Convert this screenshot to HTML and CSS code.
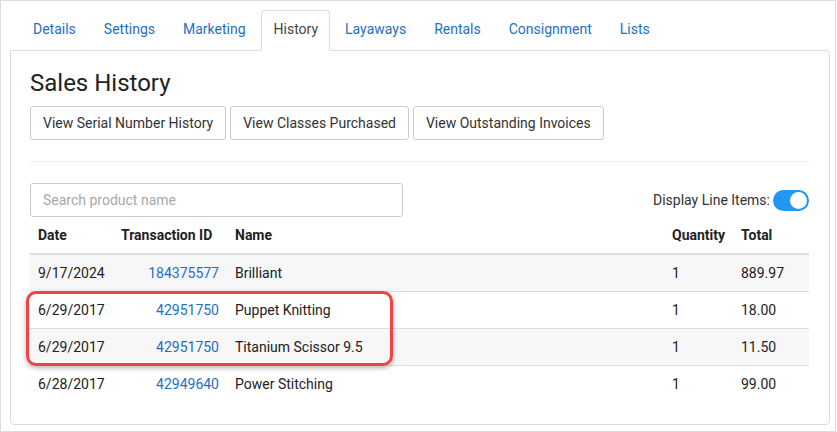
FILE: index.html
```html
<!DOCTYPE html>
<html>
<head>
<meta charset="utf-8">
<link rel="stylesheet" href="styles.css">
</head>
<body>
<div class="frame">
  <ul class="tabs">
    <li class="tab">Details</li>
    <li class="tab">Settings</li>
    <li class="tab">Marketing</li>
    <li class="tab active">History</li>
    <li class="tab">Layaways</li>
    <li class="tab">Rentals</li>
    <li class="tab">Consignment</li>
    <li class="tab">Lists</li>
  </ul>
  <div class="card">
    <h3 class="title">Sales History</h3>
    <div class="btns">
      <button class="btn">View Serial Number History</button>
      <button class="btn">View Classes Purchased</button>
      <button class="btn">View Outstanding Invoices</button>
    </div>
    <hr class="sep">
    <div class="filter">
      <input class="search" type="text" placeholder="Search product name">
      <div class="toggle-wrap">
        <span class="toggle-label">Display Line Items:</span>
        <span class="toggle"><span class="knob"></span></span>
      </div>
    </div>
    <div class="table-wrap">
      <table class="tbl">
        <colgroup>
          <col class="c-date"><col class="c-id"><col class="c-name"><col class="c-qty"><col class="c-total">
        </colgroup>
        <thead>
          <tr><th>Date</th><th>Transaction ID</th><th>Name</th><th>Quantity</th><th>Total</th></tr>
        </thead>
        <tbody>
          <tr class="odd"><td>9/17/2024</td><td class="id"><a>184375577</a></td><td>Brilliant</td><td>1</td><td>889.97</td></tr>
          <tr><td>6/29/2017</td><td class="id"><a>42951750</a></td><td>Puppet Knitting</td><td>1</td><td>18.00</td></tr>
          <tr class="odd"><td>6/29/2017</td><td class="id"><a>42951750</a></td><td>Titanium Scissor 9.5</td><td>1</td><td>11.50</td></tr>
          <tr><td>6/28/2017</td><td class="id"><a>42949640</a></td><td>Power Stitching</td><td>1</td><td>99.00</td></tr>
        </tbody>
      </table>
      <div class="highlight"></div>
    </div>
  </div>
</div>
</body>
</html>
```

FILE: styles.css
```css
* { box-sizing: border-box; }
html, body { margin: 0; padding: 0; background: #fff; }
body {
  font-family: Roboto, "Liberation Sans", Arial, sans-serif;
  font-size: 14px;
  color: #222;
}
.frame {
  width: 836px;
  height: 432px;
  border: 1px solid #ddd;
  padding: 9px 5px 6px 9px;
  display: flex;
  flex-direction: column;
}
.tabs {
  list-style: none;
  margin: 0;
  padding: 0 0 0 10px;
  display: flex;
  height: 40px;
}
.tab {
  padding: 8px 12px 10px;
  line-height: 20px;
  border: 1px solid transparent;
  border-radius: 4px 4px 0 0;
  margin-right: 2px;
  color: #1e6fc4;
  position: relative;
}
.tab.active {
  color: #444;
  background: #fff;
  border-color: #ddd #ddd transparent;
  z-index: 1;
  height: 41px;
  padding-right: 11px;
}
.card {
  flex: 1;
  border: 1px solid #ddd;
  border-radius: 0 4px 4px 4px;
  padding: 0 20px 20px 19px;
  background: #fff;
}
.title {
  font-size: 24px;
  font-weight: 400;
  line-height: 1.1;
  margin: 19px 0 10px;
  color: #222;
}
.btns { display: flex; gap: 4px; }
.btn {
  font-family: inherit;
  font-size: 14px;
  line-height: 20px;
  padding: 6px 12px;
  background: #fff;
  border: 1px solid #ccc;
  border-radius: 3px;
  color: #333;
}
.sep {
  border: 0;
  border-top: 1px solid #eee;
  margin: 21px 0 21px;
}
.filter {
  display: flex;
  justify-content: space-between;
  align-items: center;
}
.search {
  width: 373px;
  height: 34px;
  border: 1px solid #ccc;
  border-radius: 3px;
  padding: 6px 12px;
  font-family: inherit;
  font-size: 14px;
  color: #333;
}
.search::placeholder { color: #a8a8a8; }
.toggle-wrap { display: flex; align-items: center; gap: 3px; }
.toggle-label { color: #333; }
.toggle {
  width: 36px;
  height: 21px;
  border-radius: 11px;
  background: #2196f3;
  display: flex;
  align-items: center;
  justify-content: flex-end;
  padding: 2px;
}
.knob {
  width: 17px;
  height: 17px;
  border-radius: 50%;
  background: #fff;
}
.table-wrap { position: relative; }
.tbl {
  width: 100%;
  border-collapse: collapse;
  table-layout: fixed;
}
.c-date { width: 83px; }
.c-id { width: 114px; }
.c-qty { width: 69px; }
.c-total { width: 76px; }
.tbl th, .tbl td {
  padding: 8px;
  line-height: 20px;
  text-align: left;
  white-space: nowrap;
}
.tbl th {
  font-weight: 700;
  color: #222;
  border-bottom: 2px solid #ddd;
}
.tbl td { border-top: 1px solid #ddd; color: #222; }
.tbl thead + tbody tr:first-child td { border-top: 0; }
.tbl td.id { text-align: right; }
.tbl a { color: #1e6fc4; }
.tbl tr.odd td { background: #f7f7f7; }
.highlight {
  position: absolute;
  left: -4px;
  top: 74px;
  width: 367px;
  height: 75px;
  border: 3px solid #f04444;
  border-radius: 10px;
  box-shadow: 0 2px 5px rgba(0,0,0,0.3);
}
```
